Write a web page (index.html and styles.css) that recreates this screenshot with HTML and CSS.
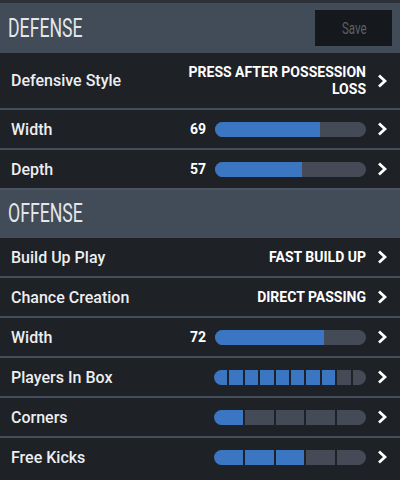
FILE: index.html
```html
<!DOCTYPE html>
<html lang="en">

<head>
    <title>Team Tactics</title>
    <link rel="stylesheet" href="styles.css">
</head>

<body>
    <div class="panel">
        <div class="section-head first">
            <h2 class="section-title"><span>DEFENSE</span></h2>
            <button class="save-btn"><span>Save</span></button>
        </div>

        <div class="row row-tall">
            <span class="label">Defensive Style</span>
            <span class="value value-wrap">PRESS AFTER POSSESSION LOSS</span>
            <svg class="chev" viewBox="0 0 10 14"><path d="M2 1.5 L8 7 L2 12.5" /></svg>
        </div>
        <div class="row">
            <span class="label">Width</span>
            <span class="num">69</span>
            <div class="bar"><div class="bar-fill" style="width: 69.5%"></div></div>
            <svg class="chev" viewBox="0 0 10 14"><path d="M2 1.5 L8 7 L2 12.5" /></svg>
        </div>
        <div class="row">
            <span class="label">Depth</span>
            <span class="num">57</span>
            <div class="bar"><div class="bar-fill" style="width: 57.5%"></div></div>
            <svg class="chev" viewBox="0 0 10 14"><path d="M2 1.5 L8 7 L2 12.5" /></svg>
        </div>

        <div class="section-head">
            <h2 class="section-title"><span>OFFENSE</span></h2>
        </div>

        <div class="row">
            <span class="label">Build Up Play</span>
            <span class="value">FAST BUILD UP</span>
            <svg class="chev" viewBox="0 0 10 14"><path d="M2 1.5 L8 7 L2 12.5" /></svg>
        </div>
        <div class="row">
            <span class="label">Chance Creation</span>
            <span class="value">DIRECT PASSING</span>
            <svg class="chev" viewBox="0 0 10 14"><path d="M2 1.5 L8 7 L2 12.5" /></svg>
        </div>
        <div class="row">
            <span class="label">Width</span>
            <span class="num">72</span>
            <div class="bar"><div class="bar-fill" style="width: 72%"></div></div>
            <svg class="chev" viewBox="0 0 10 14"><path d="M2 1.5 L8 7 L2 12.5" /></svg>
        </div>
        <div class="row">
            <span class="label">Players In Box</span>
            <div class="seg-bar seg-10">
                <i class="on"></i><i class="on"></i><i class="on"></i><i class="on"></i><i class="on"></i>
                <i class="on"></i><i class="on"></i><i class="on"></i><i></i><i></i>
            </div>
            <svg class="chev" viewBox="0 0 10 14"><path d="M2 1.5 L8 7 L2 12.5" /></svg>
        </div>
        <div class="row">
            <span class="label">Corners</span>
            <div class="seg-bar seg-5">
                <i class="on"></i><i></i><i></i><i></i><i></i>
            </div>
            <svg class="chev" viewBox="0 0 10 14"><path d="M2 1.5 L8 7 L2 12.5" /></svg>
        </div>
        <div class="row">
            <span class="label">Free Kicks</span>
            <div class="seg-bar seg-5">
                <i class="on"></i><i class="on"></i><i class="on"></i><i></i><i></i>
            </div>
            <svg class="chev" viewBox="0 0 10 14"><path d="M2 1.5 L8 7 L2 12.5" /></svg>
        </div>
    </div>
</body>

</html>
```

FILE: styles.css
```css
body {
    margin: 0;
    background-color: #1e2126;
    font-family: Roboto, "Liberation Sans", sans-serif;
}

.panel {
    width: 400px;
    height: 480px;
    overflow: hidden;
    border-top: 3px solid #2b3039;
    background-color: #1e2126;
}

/* section headers */
.section-head {
    display: flex;
    align-items: center;
    justify-content: space-between;
    height: 46px;
    padding: 0 8px;
    background-color: #424b58;
    border-top: 2px solid #4b5462;
}

.section-head.first {
    height: 50px;
    border-top: 0;
}

.section-title {
    margin: 0;
    font-size: 26px;
    font-weight: 400;
    color: #e4e7ea;
    line-height: 1;
}

.section-title span,
.save-btn span {
    display: inline-block;
    transform: scaleX(0.68);
    transform-origin: left center;
}

.save-btn {
    width: 77px;
    height: 36px;
    border: 0;
    padding: 0 0 0 27px;
    text-align: left;
    background-color: #15181c;
    color: #5b6068;
    font-family: Roboto, "Liberation Sans", sans-serif;
    font-size: 17px;
}

/* rows */
.row {
    display: flex;
    align-items: center;
    height: 38px;
    padding: 0 13px 0 11px;
    border-top: 2px solid #454c5c;
}

.row-tall {
    height: 55px;
    border-top: 0;
}

.label {
    flex: 1;
    font-size: 16px;
    font-weight: 500;
    color: #eceef0;
}

.value {
    font-size: 14px;
    font-weight: 700;
    color: #ffffff;
    text-align: right;
    line-height: 17px;
}

.value-wrap {
    max-width: 182px;
}

.num {
    margin-right: 9px;
    font-size: 14px;
    font-weight: 700;
    color: #ffffff;
}

.bar {
    width: 151px;
    height: 15px;
    border-radius: 8px;
    overflow: hidden;
    background-color: #444b56;
}

.bar-fill {
    height: 100%;
    background-color: #3b76c3;
}

.seg-bar {
    display: grid;
    gap: 2px;
    width: 152px;
    height: 15px;
    border-radius: 8px;
    overflow: hidden;
}

.seg-10 {
    grid-template-columns: repeat(10, 1fr);
}

.seg-5 {
    grid-template-columns: repeat(5, 1fr);
}

.seg-bar i {
    background-color: #444b56;
}

.seg-bar i.on {
    background-color: #3b76c3;
}

.chev {
    width: 10px;
    height: 14px;
    margin-left: 11px;
    fill: none;
    stroke: #ffffff;
    stroke-width: 2.8;
}
```
